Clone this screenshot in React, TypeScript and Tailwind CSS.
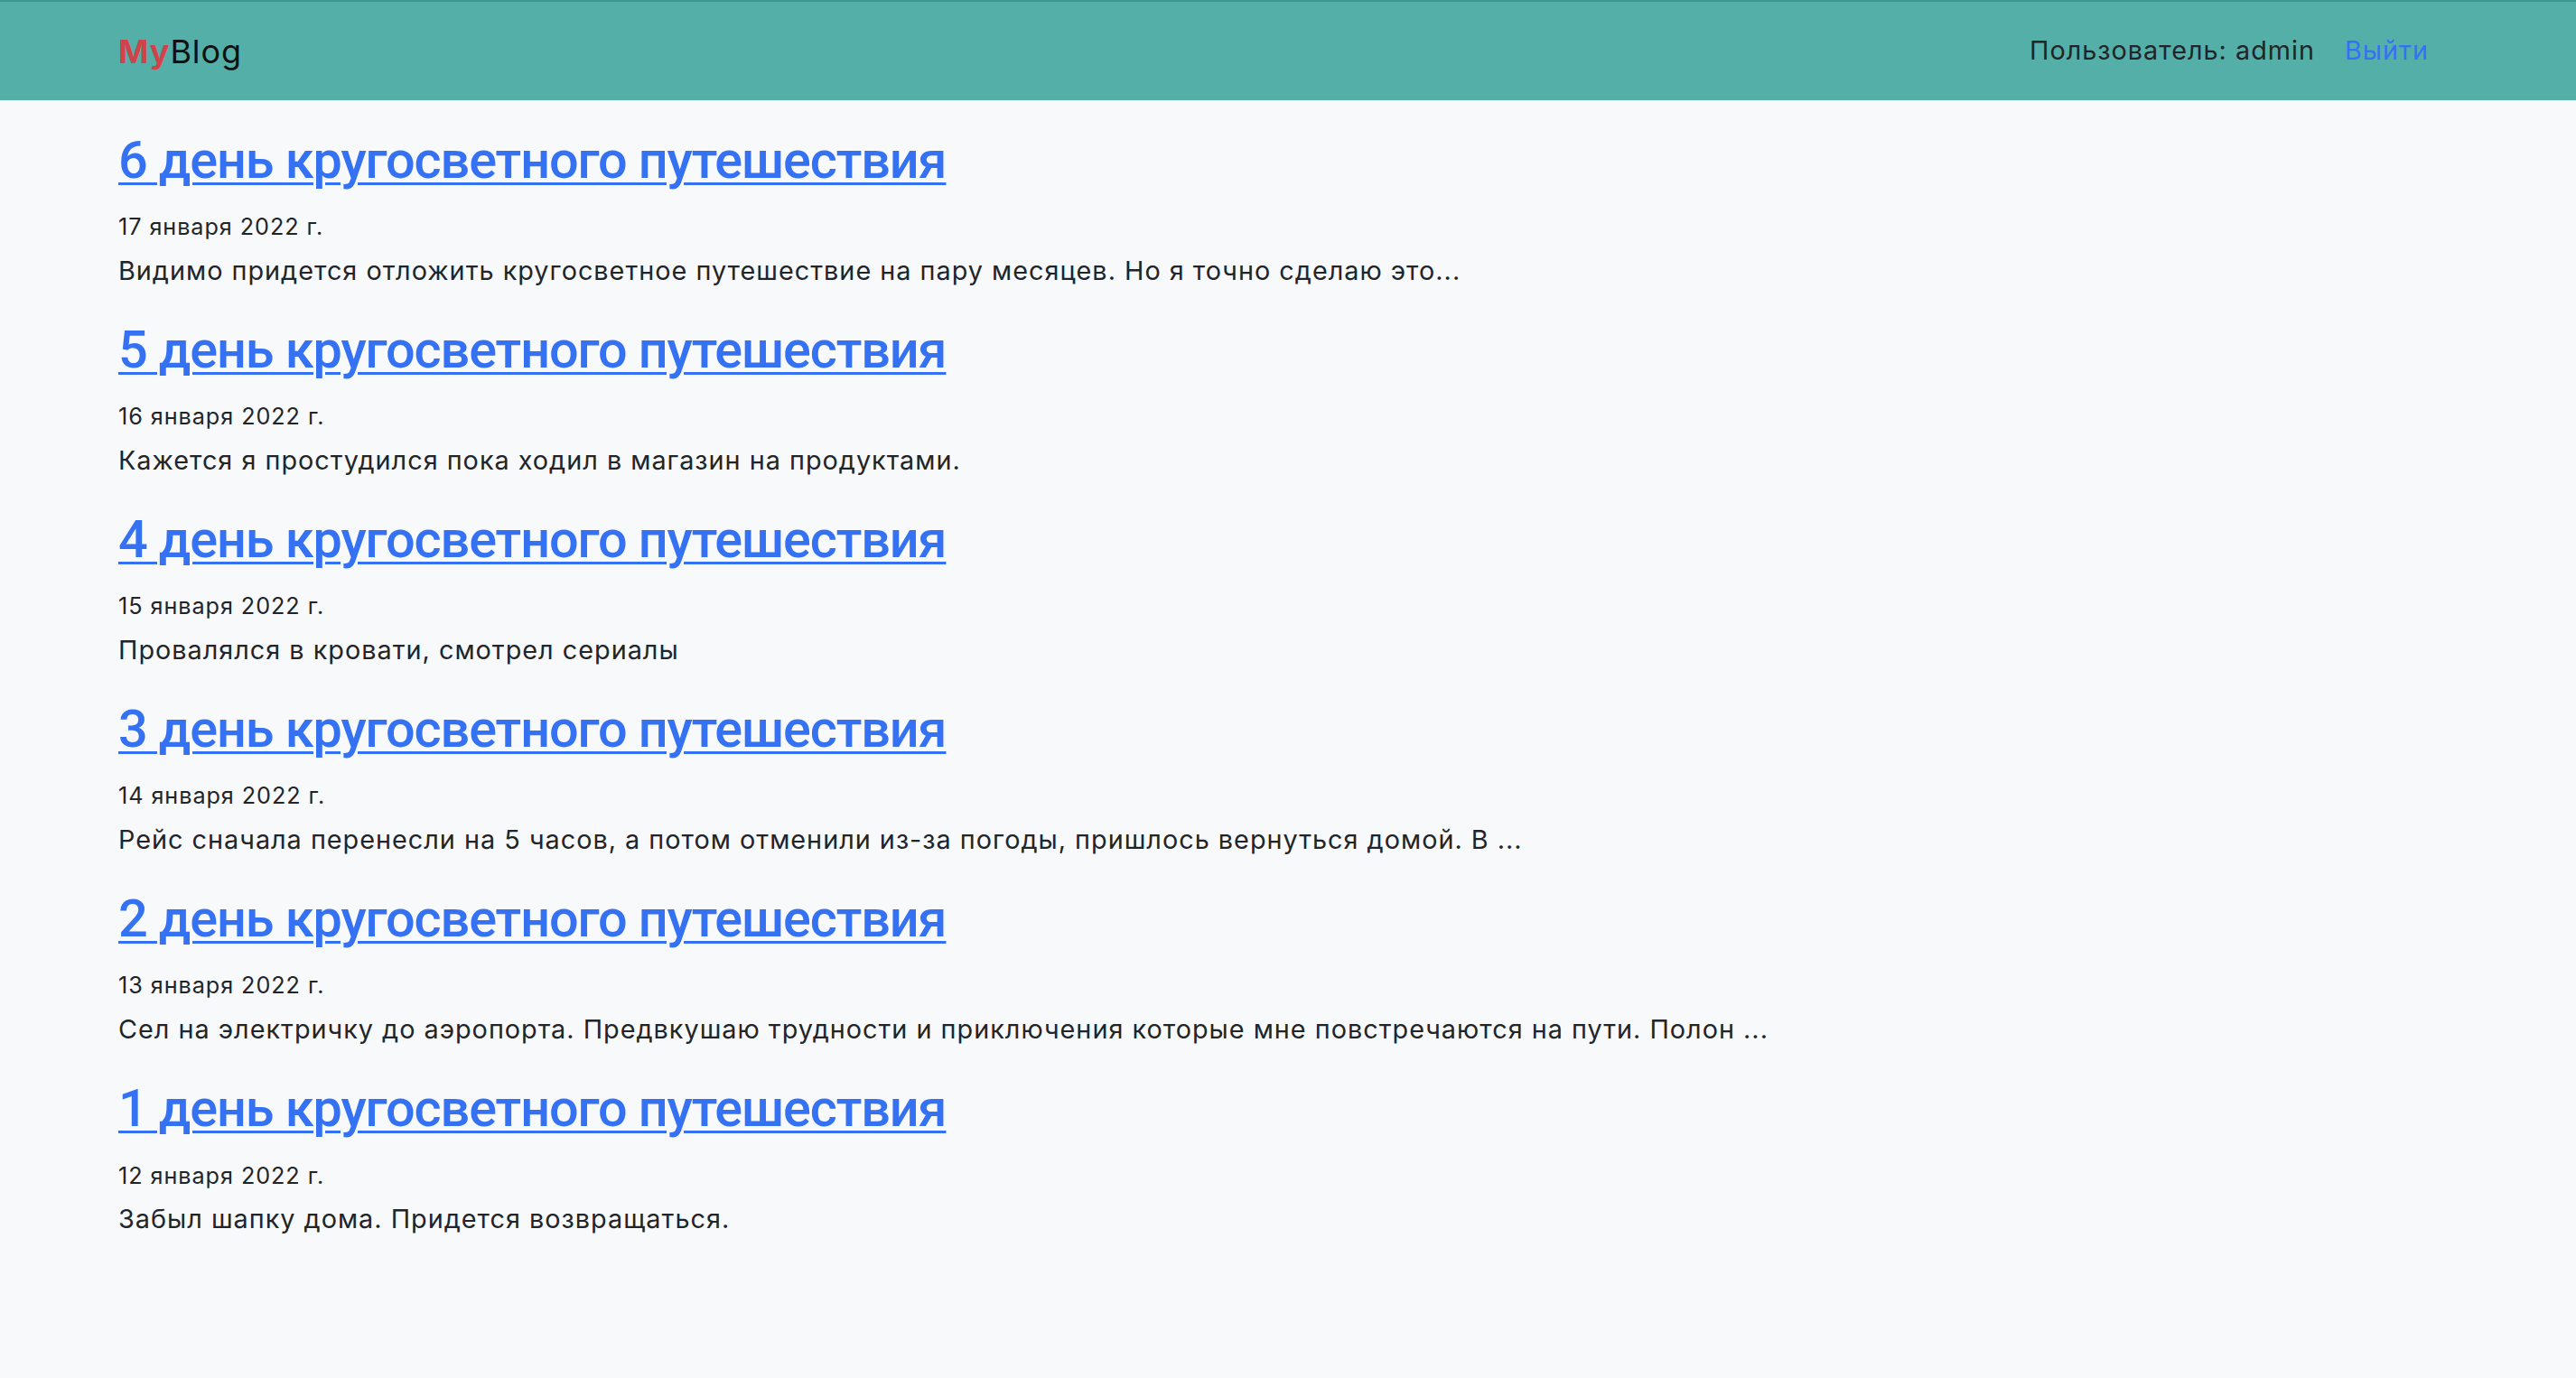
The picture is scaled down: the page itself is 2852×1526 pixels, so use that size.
import React from "react";

type Post = {
  id: number;
  title: string;
  date: string;
  excerpt: string;
};

const posts: Post[] = [
  {
    id: 6,
    title: "6 день кругосветного путешествия",
    date: "17 января 2022 г.",
    excerpt: "Видимо придется отложить кругосветное путешествие на пару месяцев. Но я точно сделаю это...",
  },
  {
    id: 5,
    title: "5 день кругосветного путешествия",
    date: "16 января 2022 г.",
    excerpt: "Кажется я простудился пока ходил в магазин на продуктами.",
  },
  {
    id: 4,
    title: "4 день кругосветного путешествия",
    date: "15 января 2022 г.",
    excerpt: "Провалялся в кровати, смотрел сериалы",
  },
  {
    id: 3,
    title: "3 день кругосветного путешествия",
    date: "14 января 2022 г.",
    excerpt: "Рейс сначала перенесли на 5 часов, а потом отменили из-за погоды, пришлось вернуться домой. В ...",
  },
  {
    id: 2,
    title: "2 день кругосветного путешествия",
    date: "13 января 2022 г.",
    excerpt: "Сел на электричку до аэропорта. Предвкушаю трудности и приключения которые мне повстречаются на пути. Полон ...",
  },
  {
    id: 1,
    title: "1 день кругосветного путешествия",
    date: "12 января 2022 г.",
    excerpt: "Забыл шапку дома. Придется возвращаться.",
  },
];

function Header() {
  return (
    <header className="h-[111px] bg-[#54afa8] border-t-2 border-[#3f968f] flex items-center justify-between pl-[131px] pr-[163px]">
      <a href="#" className="text-[36px] leading-none text-[#111] tracking-[0.9px]">
        <span className="text-[#d1434b] font-bold">My</span>Blog
      </a>
      <div className="flex items-center gap-[33px] text-[28.8px] leading-none tracking-[1px]">
        <span className="text-[#212529]">Пользователь: admin</span>
        <a href="#" className="text-[#3571f3]">
          Выйти
        </a>
      </div>
    </header>
  );
}

function PostItem({ post }: { post: Post }) {
  return (
    <article className="mb-[32px]">
      <h2
        className="text-[57.6px] leading-[1.2] font-medium tracking-[-1.1px] mb-[21px]"
        style={{ fontFamily: "Roboto, Inter, sans-serif" }}
      >
        <a href="#" className="text-[#3571f3] underline decoration-[3px] underline-offset-[5px]">
          {post.title}
        </a>
      </h2>
      <div className="text-[25.2px] leading-[1.5] tracking-[0.95px] text-[#212529]">{post.date}</div>
      <p className="mt-[7px] text-[28.8px] leading-[1.5] tracking-[1px] text-[#212529]">{post.excerpt}</p>
    </article>
  );
}

export default function App() {
  return (
    <div
      className="min-h-screen bg-[#f8f9fa]"
      style={{ fontFamily: "Inter, 'Noto Sans', sans-serif" }}
    >
      <Header />
      <main className="pl-[131px] pt-[32px]">
        {posts.map((post) => (
          <PostItem key={post.id} post={post} />
        ))}
      </main>
    </div>
  );
}
